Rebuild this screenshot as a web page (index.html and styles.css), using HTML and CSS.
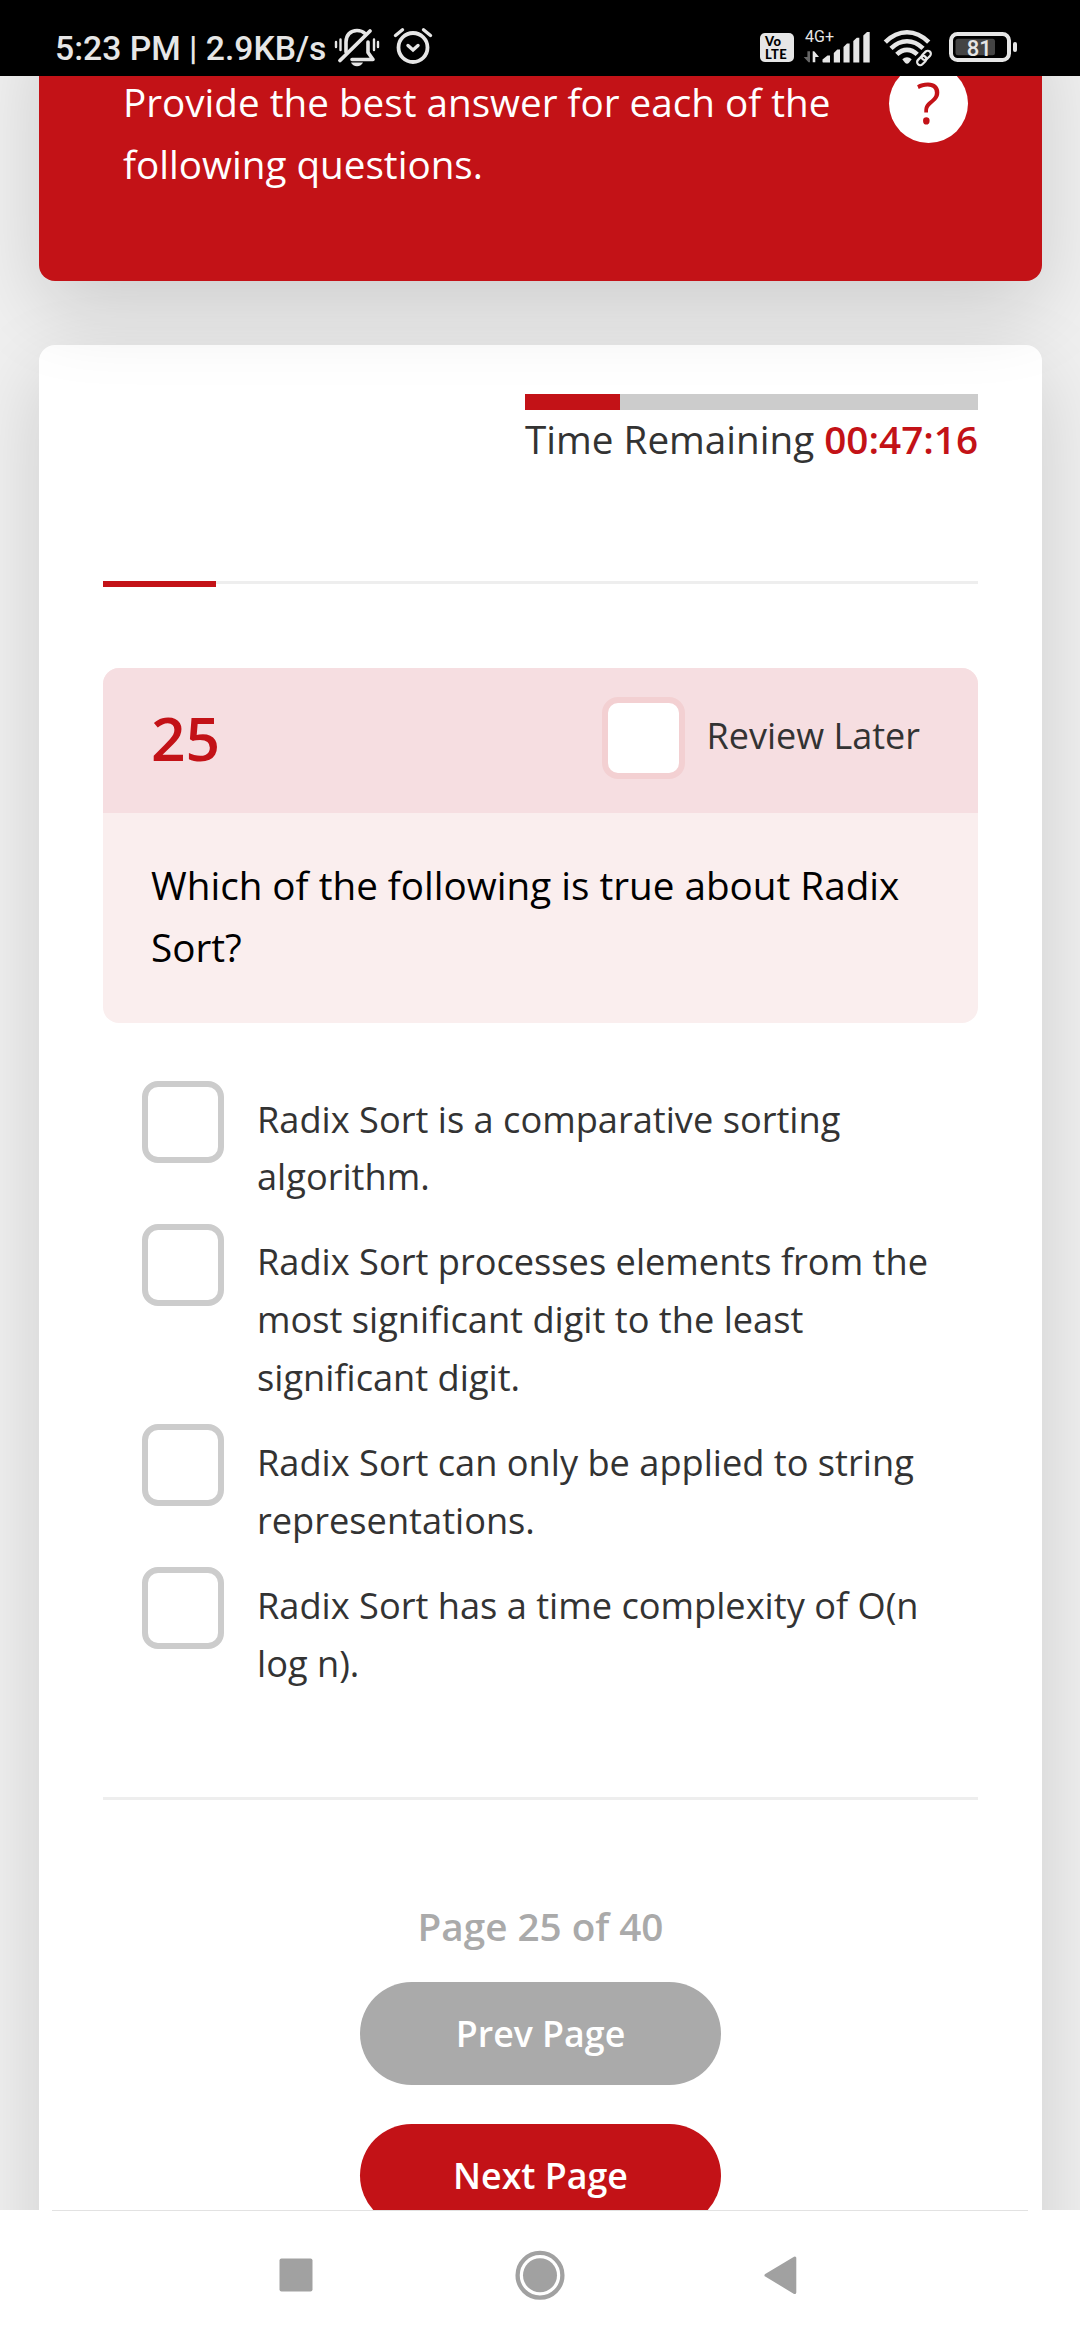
FILE: index.html
```html
<!DOCTYPE html>
<html lang="en">
<head>
<meta charset="utf-8">
<title>Quiz</title>
<link rel="stylesheet" href="styles.css">
</head>
<body>
<div class="status">
  <span class="status-text">5:23 PM | 2.9KB/s</span>
  <svg class="bell" width="46" height="40" viewBox="0 0 46 40" fill="none" stroke="#e6e6e6" stroke-linecap="round">
    <path d="M12 25V15c0-7 4.500-11.500 11-11.500 3 0 6 1 8 3" stroke-width="3.600"/>
    <path d="M6 33.500 36 4" stroke-width="3.800"/>
    <path d="M18 32.500h21l-5-7V15" stroke-width="3.600" stroke-linejoin="round"/>
    <path d="M17 35.500h12c-1 2.300-3.300 3.700-6 3.700s-5-1.400-6-3.700z" fill="#e6e6e6" stroke="none"/>
    <path d="M2 15v5M6.500 12.500v10.500M40 12.500v10.500M44 15v5" stroke-width="2.400"/>
  </svg>
  <svg class="alarm" width="40" height="38" viewBox="0 0 40 38" fill="none" stroke="#e6e6e6" stroke-linecap="round">
    <circle cx="20" cy="20.500" r="14.500" stroke-width="3.800"/>
    <path d="M2.500 8.500 9.500 2.800M37.500 8.500 30.500 2.800" stroke-width="3.400"/>
    <path d="M15 18.500l5 4.500 5-4.500" stroke-width="3.400"/>
  </svg>
  <span class="volte"><span>Vo</span><span>LTE</span></span>
  <svg class="signal" width="68" height="36" viewBox="0 0 68 36" fill="#e6e6e6">
    <text class="net" x="0" y="14">4G+</text>
    <path d="M2.400 23.300H5v11H3.500L-1.300 29h3.700z" fill="#666"/>
    <path d="M7.700 34.300v-11h1.500L14 29h-3.700v5.300z"/>
    <path d="M17.500 34v-2.500L22.500 27.500H25v7h-7z"/>
    <path d="M28.800 25l3.500-3.500H35v13h-6.200z"/>
    <path d="M38.500 19l3.500-3.500h2.600v19h-6.100z"/>
    <path d="M48.300 13l3.500-3.300h2.500v24.800h-6z"/>
    <path d="M58.300 7.500l3.700-3.500h2.700v30.500h-6.400z"/>
  </svg>
  <svg class="wifi" width="52" height="38" viewBox="0 0 52 38" fill="none" stroke="#e6e6e6">
    <path d="M2.300 14.200C15.500 1 32.500 1 45.700 14.200" stroke-width="4.600"/>
    <path d="M8 20.400c9.800-9.500 22.200-9.500 32 0" stroke-width="4.600"/>
    <path d="M13.800 26.400c6.200-6 14.200-6 20.400 0" stroke-width="4.600"/>
    <path d="M19.300 31.300c2.800-2.700 6.600-2.700 9.400 0l-2.700 3.500q-2 2-4 0z" fill="#e6e6e6" stroke="none"/>
    <g stroke="#000" stroke-width="6"><rect x="35" y="28" width="11" height="7" rx="3.500" transform="rotate(-45 40 31)"/></g>
    <g stroke-width="2.200"><rect x="33.500" y="29.500" width="10.500" height="6.200" rx="3.100" transform="rotate(-45 38.700 32.600)"/><rect x="38" y="24.300" width="10.500" height="6.200" rx="3.100" transform="rotate(-45 43.200 27.400)"/></g>
  </svg>
  <svg class="battery" width="70" height="32" viewBox="0 0 70 32">
    <rect x="2" y="3" width="58" height="26" rx="6.500" fill="none" stroke="#e6e6e6" stroke-width="4"/>
    <rect x="6.500" y="7.700" width="39.500" height="16.500" rx="2.500" fill="#444"/>
    <rect x="64" y="11" width="4" height="10" rx="2" fill="#e6e6e6"/>
    <text class="level" x="30.300" y="24.500" text-anchor="middle">81</text>
  </svg>
</div>
<main class="page">
  <header class="intro">
    <p class="intro-text">Provide the best answer for each of the following questions.</p>
    <span class="help">?</span>
  </header>
  <section class="quiz">
    <div class="timer">
      <div class="timer-bar"><div class="timer-fill" style="width:21%"></div></div>
      <div class="timer-text">Time Remaining <b>00:47:16</b></div>
    </div>
    <div class="steps"><div class="steps-fill"></div></div>
    <div class="question">
      <div class="question-head">
        <span class="number">25</span>
        <span class="box box-review"></span>
        <span class="review">Review Later</span>
      </div>
      <div class="question-text">Which of the following is true about Radix Sort?</div>
    </div>
    <ul class="options">
      <li><span class="box"></span><span class="label">Radix Sort is a comparative sorting algorithm.</span></li>
      <li><span class="box"></span><span class="label">Radix Sort processes elements from the most significant digit to the least significant digit.</span></li>
      <li><span class="box"></span><span class="label">Radix Sort can only be applied to string representations.</span></li>
      <li><span class="box"></span><span class="label">Radix Sort has a time complexity of O(n log n).</span></li>
    </ul>
    <div class="pager">
      <div class="page-count">Page 25 of 40</div>
      <div class="button button-prev">Prev Page</div>
      <div class="button button-next">Next Page</div>
    </div>
  </section>
</main>
<nav class="nav">
  <svg width="50" height="50" viewBox="0 0 50 50"><rect x="8.500" y="8.500" width="33" height="33" rx="2" fill="#a1a1a1"/></svg>
  <svg width="50" height="50" viewBox="0 0 50 50"><circle cx="25" cy="25.300" r="22.400" fill="none" stroke="#a1a1a1" stroke-width="4.300"/><circle cx="25" cy="25.300" r="17" fill="#a1a1a1"/></svg>
  <svg width="50" height="50" viewBox="0 0 50 50"><path d="M7 25.300 35.800 8v34.600z" fill="#a1a1a1" stroke="#a1a1a1" stroke-width="3" stroke-linejoin="round"/></svg>
</nav>
</body>
</html>
```

FILE: styles.css
```css
* { box-sizing: border-box; }
body {
  margin: 0;
  width: 1080px;
  height: 2340px;
  overflow: hidden;
  display: flex;
  flex-direction: column;
  background: #fff;
  color: #333;
  font-family: "Open Sans", sans-serif;
  font-size: 38.65px;
  line-height: 62px;
}

/* Status bar */
.status {
  flex: none;
  height: 76px;
  padding: 0 61px 0 55px;
  display: flex;
  align-items: flex-start;
  background: #000;
  color: #e6e6e6;
}
.status-text {
  flex: none;
  width: 279px;
  margin-top: 29px;
  font: 500 33.7px/40px Roboto, sans-serif;
  white-space: nowrap;
}
.status svg { flex: none; overflow: visible; }
.bell { margin-top: 27px; }
.alarm { margin: 27px 0 0 13px; }
.volte {
  flex: none;
  width: 34px;
  height: 29px;
  margin: 33px 0 0 327px;
  padding: 2px 0 0 5px;
  border-radius: 5px;
  display: flex;
  flex-direction: column;
  background: #e6e6e6;
  color: #000;
  font: 900 13px/12.5px Lato, sans-serif;
  letter-spacing: .4px;
}
.signal { margin: 28px 0 0 11px; }
.net { font: 400 16px Roboto, sans-serif; }
.wifi { margin: 28px 0 0 10px; }
.battery { margin: 31px 0 0 14px; }
.level { font: 500 22px Roboto, sans-serif; fill: #e6e6e6; }

/* Scrolled page */
.page {
  flex: none;
  height: 2134px;
  overflow: hidden;
  padding: 0 38px 0 39px;
  background: #f0f0f0;
}
.intro {
  position: relative;
  height: 269px;
  margin-top: -64px;
  padding: 59px 74px 0 84px;
  border-radius: 16px;
  display: flex;
  justify-content: space-between;
  align-items: flex-start;
  background: #c31217;
  color: #fff;
  box-shadow: 0 27px 82px rgba(0, 0, 0, .15);
}
.intro-text { width: 730px; margin: 0; }
.help {
  width: 79px;
  height: 79px;
  margin-top: -7.5px;
  border-radius: 50%;
  background: #fff;
  color: #c31217;
  font-size: 57px;
  line-height: 76px;
  text-align: center;
}
.quiz {
  height: 2100px;
  margin-top: 64px;
  padding: 49px 64px 0;
  border-radius: 16px;
  background: #fff;
  box-shadow: 0 27px 82px rgba(0, 0, 0, .15);
}
.timer { width: 453px; height: 78px; margin-left: auto; }
.timer-bar { height: 16px; background: #ccc; }
.timer-fill { height: 100%; background: #c31217; }
.timer-text { margin-top: -2px; white-space: nowrap; }
.timer-text b { font-weight: 600; color: #c31217; }
.steps { height: 3px; margin-top: 109px; background: #eee; }
.steps-fill { width: 113px; height: 6px; background: #c31217; }

.question {
  margin-top: 84px;
  border-radius: 16px;
  overflow: hidden;
  background: #faeeee;
}
.question-head {
  height: 145px;
  padding: 0 58px 0 48px;
  display: flex;
  align-items: flex-start;
  background: #f6dee1;
}
.number {
  margin: 39px auto 0 0;
  font-size: 60.5px;
  font-weight: 600;
  color: #c31217;
}
.box {
  flex: none;
  width: 82px;
  height: 82px;
  border: 6px solid #ccc;
  border-radius: 16px;
  background: #fff;
}
.box-review { width: 83px; margin-top: 29px; border-color: #f3d0d2; }
.review { margin: 37px 0 0 21px; font-size: 36px; white-space: nowrap; }
.question-text {
  height: 210px;
  padding: 41px 48px 0;
  color: #000;
}
.options {
  list-style: none;
  margin: 58px 0 0;
  padding: 0 0 0 39px;
  display: flex;
  flex-direction: column;
  gap: 27.3px;
  font-size: 36.2px;
  line-height: 57.75px;
}
.options li { display: flex; gap: 33px; }
.label { width: 700px; padding-top: 9.7px; margin-bottom: -9.7px; }

.pager {
  margin-top: 114.35px;
  padding-top: 95px;
  border-top: 3px solid #eee;
  display: flex;
  flex-direction: column;
  align-items: center;
  font-weight: 600;
}
.page-count { color: #aaa; }
.button {
  width: 361px;
  height: 103px;
  border-radius: 52px;
  font-size: 35.75px;
  line-height: 102px;
  text-align: center;
  color: #fff;
}
.button-prev { margin-top: 25px; background: #aaa; }
.button-next { margin-top: 39px; background: #c31217; }

/* System navigation */
.nav {
  flex: none;
  height: 130px;
  padding: 40px 271px 0;
  display: flex;
  justify-content: space-between;
  background: linear-gradient(#e2e2e2, #e2e2e2) 52px 0 / 976px 1px no-repeat #fff;
}
```
